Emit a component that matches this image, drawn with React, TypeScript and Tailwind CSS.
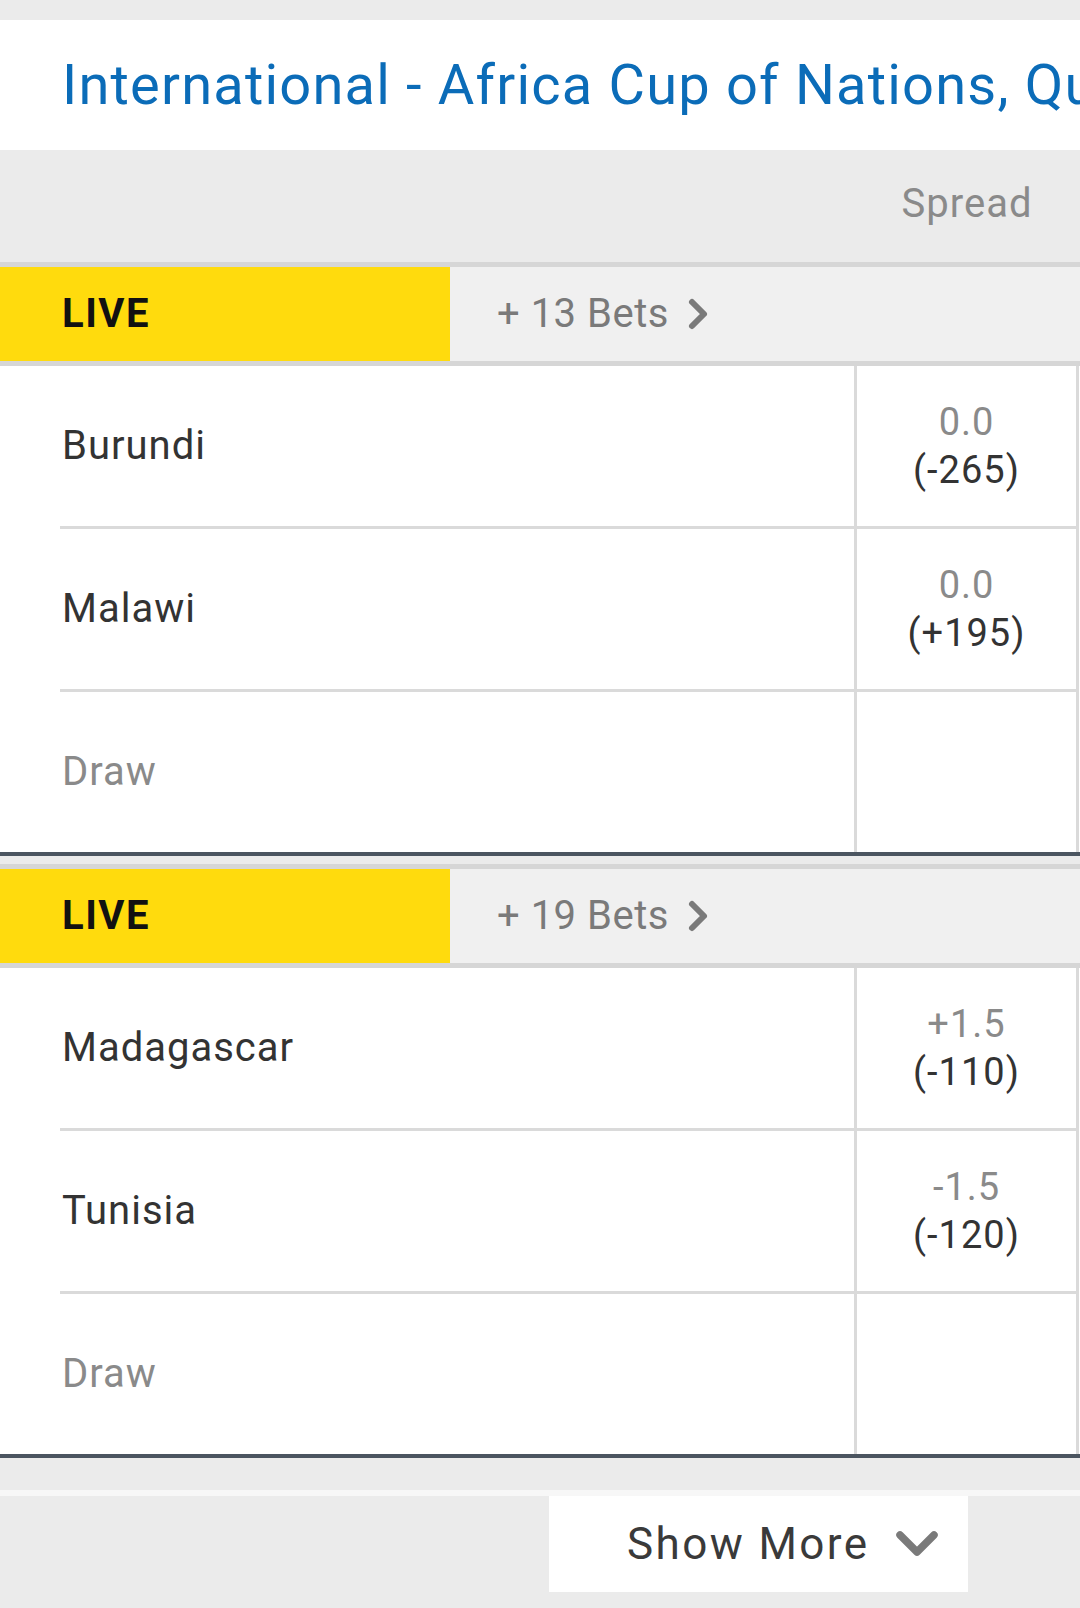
import React from 'react';

type Line = { name: string; top?: string; price?: string; muted?: boolean };

const matches: { bets: number; lines: Line[] }[] = [
  {
    bets: 13,
    lines: [
      { name: 'Burundi', top: '0.0', price: '(-265)' },
      { name: 'Malawi', top: '0.0', price: '(+195)' },
      { name: 'Draw', muted: true },
    ],
  },
  {
    bets: 19,
    lines: [
      { name: 'Madagascar', top: '+1.5', price: '(-110)' },
      { name: 'Tunisia', top: '-1.5', price: '(-120)' },
      { name: 'Draw', muted: true },
    ],
  },
];

const ChevronRight = () => (
  <svg width="22" height="34" viewBox="0 0 22 34" className="ml-[18px]">
    <path d="M5 5 L17 17 L5 29" fill="none" stroke="#7a7a7a" strokeWidth="6" strokeLinecap="round" strokeLinejoin="round" />
  </svg>
);

const ChevronDown = () => (
  <svg width="44" height="28" viewBox="0 0 44 28">
    <path d="M5 5 L22 22 L39 5" fill="none" stroke="#7a7a7a" strokeWidth="7.5" strokeLinecap="round" strokeLinejoin="round" />
  </svg>
);

const MatchRow = ({ line, last }: { line: Line; last: boolean }) => (
  <div className={`flex bg-white ${last ? 'h-[160px]' : 'h-[163px]'}`}>
    <div className="flex-1 pl-[60px]">
      <div
        className={`h-full flex items-center pl-[2px] text-[40px] tracking-[1px] ${last ? '' : 'border-b-[3px] border-[#dadada]'} ${
          line.muted ? 'text-[#8a8a8a]' : 'text-[#333333]'
        }`}
      >
        {line.name}
      </div>
    </div>
    <div
      className={`w-[225px] mr-[1px] flex flex-col items-center justify-center border-l-[3px] border-r-[3px] border-[#dadada] leading-[48px] text-[38px] tracking-[1px] ${
        last ? '' : 'border-b-[3px]'
      }`}
    >
      {line.top && <span className="text-[#8a8a8a]">{line.top}</span>}
      {line.price && <span className="text-[#333333]">{line.price}</span>}
    </div>
  </div>
);

const Match = ({ bets, lines }: { bets: number; lines: Line[] }) => (
  <div className="border-b-[4px] border-[#4b5560]">
    <div className="flex h-[104px] border-t-[5px] border-b-[5px] border-[#d6d6d6]">
      <div className="w-[450px] bg-[#ffdb0d] flex items-center pl-[62px] text-[40px] font-bold tracking-[1.5px] text-[#111111]">
        LIVE
      </div>
      <div className="flex-1 bg-[#f0f0f0] flex items-center pl-[47px] text-[40px] tracking-[0.5px] text-[#7a7a7a]">
        <span>+ {bets} Bets</span>
        <ChevronRight />
      </div>
    </div>
    {lines.map((l, i) => (
      <MatchRow key={i} line={l} last={i === lines.length - 1} />
    ))}
  </div>
);

export default function App() {
  return (
    <div className="w-[1080px] min-h-[1608px] bg-[#ebebeb] overflow-hidden font-['Roboto',sans-serif]">
      <div className="h-[20px]" />
      <div className="h-[130px] bg-white flex items-center pl-[62px] whitespace-nowrap overflow-hidden text-[56px] tracking-[1.2px] text-[#0b6cb8]">
        International - Africa Cup of Nations, Qualification
      </div>
      <div className="h-[112px] flex justify-end">
        <div className="w-[226px] flex items-center justify-center pb-[4px] text-[40px] tracking-[1px] text-[#8a8a8a]">Spread</div>
      </div>
      <Match {...matches[0]} />
      <div className="h-[8px]" />
      <Match {...matches[1]} />
      <div className="h-[32px]" />
      <div className="h-[6px] bg-[#f7f7f7]" />
      <div className="flex justify-end pr-[112px]">
        <button className="w-[419px] h-[96px] bg-white flex items-center pl-[78px] text-[44px] tracking-[2.4px] text-[#3a3a3a]">
          <span>Show More</span>
          <span className="ml-[26px] flex items-center">
            <ChevronDown />
          </span>
        </button>
      </div>
    </div>
  );
}
